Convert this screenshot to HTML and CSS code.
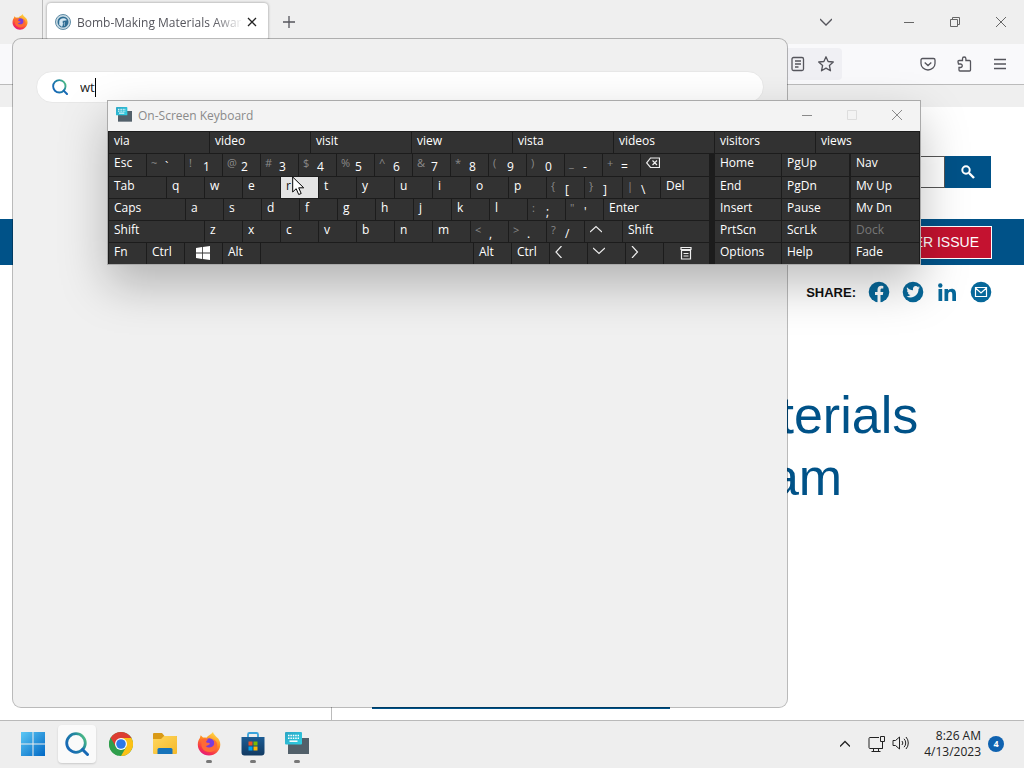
FILE: index.html
```
<!DOCTYPE html>
<html lang="en">
<head>
    <meta charset="UTF-8">
    <meta name="viewport" content="width=device-width, initial-scale=1.0">
    <title>Desktop</title>
    <link rel="stylesheet" href="styles.css">
</head>
<body>
    <!-- Shared icons -->
    <svg class="sprite" aria-hidden="true">
        <defs>
            <linearGradient id="g-search" x1="0" y1="0.6" x2="1" y2="0">
                <stop offset="0" stop-color="#1769b5"/>
                <stop offset="0.6" stop-color="#23899e"/>
                <stop offset="1" stop-color="#5fd07a"/>
            </linearGradient>
            <linearGradient id="g-fox" x1="0.8" y1="0" x2="0.3" y2="1">
                <stop offset="0" stop-color="#ffe24a"/>
                <stop offset="0.45" stop-color="#ff8a20"/>
                <stop offset="0.8" stop-color="#f7354b"/>
                <stop offset="1" stop-color="#e3177f"/>
            </linearGradient>
            <linearGradient id="g-win" x1="0" y1="0" x2="1" y2="1">
                <stop offset="0" stop-color="#5cc8f5"/>
                <stop offset="1" stop-color="#0067c4"/>
            </linearGradient>
            <linearGradient id="g-kb" x1="0" y1="0" x2="1" y2="1">
                <stop offset="0" stop-color="#2ca5c4"/>
                <stop offset="1" stop-color="#2fd0e4"/>
            </linearGradient>
            <linearGradient id="g-folder" x1="0" y1="0" x2="1" y2="1">
                <stop offset="0" stop-color="#ffd75e"/>
                <stop offset="1" stop-color="#f5b92a"/>
            </linearGradient>
            <linearGradient id="g-store" x1="0" y1="0" x2="0" y2="1">
                <stop offset="0" stop-color="#1b5c94"/>
                <stop offset="1" stop-color="#123a62"/>
            </linearGradient>
        </defs>
        <symbol id="i-search" viewBox="0 0 24 24">
            <circle cx="11" cy="11" r="9.3" fill="none" stroke="url(#g-search)" stroke-width="2.8"/>
            <path d="M17.5 17.5l5 5" stroke="#1769b5" stroke-width="3" stroke-linecap="round"/>
        </symbol>
        <symbol id="i-firefox" viewBox="0 0 24 24">
            <path d="M16 0c.4 2 2 3.300 3.500 5 2.600 1.800 3.900 4.800 3.800 7.700C23.100 18.700 18 23.500 12 23.500S.8 18.800.8 12.700c0-3 .9-5.200 2.100-6.700l.8-2.700 2.300 2.300c1.300-.3 2.400-.2 3.400.2C11 3.300 14 3 16 0z" fill="url(#g-fox)"/>
            <circle cx="12.300" cy="11.500" r="5.300" fill="#7a3ddb"/>
            <path d="M4.500 7.500c2.500-1.500 5-1 6.700.4-1.700.3-2.200 1.300-2 2.300 1 .8 2.900.3 3.800 1.500-1 1.700-3 1.500-4.200 2.500 2.500 2.500 7 1.300 8.300-1.600.6-2.300 0-4.400-1.300-5.700 3.500 1.600 5 4.500 4.200 8-1 3-4 5.200-7.600 5.200-5.400 0-8.400-4-7.900-8z" fill="#ff6a35"/>
        </symbol>
        <symbol id="i-keyboard" viewBox="0 0 24 24">
            <path d="M3 6h21v16H3z" fill="#52606a"/>
            <rect x="0" y="0" width="17" height="12.500" rx="1" fill="url(#g-kb)"/>
            <path d="M3 3.500h11M3 6.200h11" stroke="#fff" stroke-width="1.500" stroke-dasharray="1.500 .9"/>
            <path d="M4.500 9.200h8" stroke="#fff" stroke-width="1.500"/>
        </symbol>
    </svg>

    <div class="desktop">
        <main class="browser">
            <!-- Tab strip -->
            <div class="tabs">
                <a class="pinned" href="#" aria-label="Firefox View"><svg width="16" height="16"><use href="#i-firefox"/></svg></a>
                <div class="tab">
                    <svg width="16" height="16" viewBox="0 0 16 16">
                        <circle cx="8" cy="8" r="7.500" fill="#c9dbe4" stroke="#5f8ca6"/>
                        <circle cx="8" cy="8" r="5.500" fill="#2f6d93"/>
                        <path d="M4.500 11V7.500c0-3 5-4 7-1.500L9 6.500c-2 0-2 2-1 3l-1 3zM9.500 8v4" fill="#d6e8f2" stroke="#d6e8f2" stroke-width=".5"/>
                    </svg>
                    <span class="tab-title">Bomb-Making Materials Awareness</span>
                    <button class="plain tab-close" aria-label="Close tab"><svg width="10" height="10" viewBox="0 0 10 10"><path d="M1 1l8 8M9 1L1 9" class="line dark"/></svg></button>
                </div>
                <button class="plain new-tab" aria-label="New tab"><svg width="12" height="12" viewBox="0 0 12 12"><path d="M6 0v12M0 6h12" class="line"/></svg></button>
                <button class="plain list-tabs" aria-label="List all tabs"><svg width="12" height="12" viewBox="0 0 12 12"><path d="M0 3l6 6 6-6" class="line"/></svg></button>
                <div class="window-buttons">
                    <button class="plain" aria-label="Minimize"><svg width="10" height="10" viewBox="0 0 10 10"><path d="M0 5.500h10" class="line thin"/></svg></button>
                    <button class="plain" aria-label="Restore"><svg width="10" height="10" viewBox="0 0 10 10"><path d="M.5 2.500h7v7h-7zM2.500 2.500v-2h7v7h-2" class="line thin"/></svg></button>
                    <button class="plain" aria-label="Close"><svg width="10" height="10" viewBox="0 0 10 10"><path d="M0 0l10 10M10 0L0 10" class="line thin"/></svg></button>
                </div>
            </div>

            <!-- Toolbar -->
            <div class="toolbar">
                <div class="urlbar">
                    <button class="plain" aria-label="Reader view"><svg width="16" height="16" viewBox="0 0 16 16"><rect x="2" y="1.500" width="11.500" height="13" rx="1.500" class="line"/><path d="M5 5h6M5 8h6M5 11h3.500" class="line"/></svg></button>
                    <button class="plain" aria-label="Bookmark"><svg width="16" height="16" viewBox="0 0 16 16"><path d="M8 .8l2.100 4.700 5.200.5-3.900 3.500 1.100 5.300L8 12.100l-4.500 2.700 1.100-5.300L.7 6l5.200-.5z" class="line" stroke-linejoin="round"/></svg></button>
                </div>
                <button class="plain" aria-label="Save to Pocket"><svg width="16" height="16" viewBox="0 0 16 16"><path d="M2.500 2.500h11a1.500 1.500 0 0 1 1.500 1.500v3.500a7 6.500 0 0 1-14 0V4a1.500 1.500 0 0 1 1.500-1.500zM4.700 6.500L8 9.500l3.300-3" class="line"/></svg></button>
                <button class="plain" aria-label="Extensions"><svg width="16" height="16" viewBox="0 0 16 16"><path d="M2 6V5.500a1 1 0 0 1 1-1h3.500V2.700a1.700 1.700 0 0 1 3.400 0v1.800H13.500a1 1 0 0 1 1 1V14a1 1 0 0 1-1 1H4a1 1 0 0 1-1-1v-2.500h1.500a1.700 1.700 0 0 0 0-3.500H2.500z" class="line"/></svg></button>
                <button class="plain" aria-label="Menu"><svg width="16" height="16" viewBox="0 0 16 16"><path d="M2 3.500h12M2 8h12M2 12.500h12" class="line"/></svg></button>
            </div>
            <div class="bookmarks"></div>

            <!-- Web page -->
            <div class="page">
                <form class="site-search">
                    <input type="text" aria-label="Search site">
                    <button type="button" aria-label="Search">
                        <svg width="16" height="16" viewBox="0 0 16 16"><circle cx="6" cy="6" r="3.700" fill="none" stroke="#fff" stroke-width="2"/><path d="M9 9l5 5" stroke="#fff" stroke-width="2.400"/></svg>
                    </button>
                </form>
                <div class="site-nav">
                    <button class="report">REPORT A CYBER ISSUE</button>
                </div>
                <div class="share">
                    <span>SHARE:</span>
                    <a href="#" aria-label="Facebook"><svg width="22" height="22" viewBox="0 0 22 22"><circle cx="11" cy="11" r="10.300" fill="#07689a"/><path d="M9.500 22v-8H7v-3h2.500V8.800c0-2.700 1.500-4 3.800-4l2 .2v2.600H14c-1.200 0-1.500.7-1.500 1.500V11h2.800l-.5 3h-2.300v8z" fill="#fff"/></svg></a>
                    <a href="#" aria-label="Twitter"><svg width="22" height="22" viewBox="0 0 22 22"><circle cx="11" cy="11" r="10.300" fill="#07689a"/><path d="M5 6.200c1.600 1.900 3.700 2.900 6 3-.5-2.600 1-4.200 2.800-4.200.8 0 1.500.3 2 .9l1.800-.7-1.200 1.600 1.600-.4-1.500 1.600c.2 5-3.600 8.400-7.900 8.400-1.600 0-3-.4-4.100-1.200 1.500.1 2.900-.3 4-1.200-1.200 0-2.200-.8-2.600-2h1.200C5.800 11.600 5 10.600 5 9.200l1.200.3C5 8.600 4.500 7.300 5 6.200z" fill="#fff"/></svg></a>
                    <a href="#" aria-label="LinkedIn"><svg width="22" height="22" viewBox="0 0 22 22"><g fill="#07689a"><circle cx="4.300" cy="4.500" r="2.200"/><path d="M2.500 8h3.700v12H2.500zM8.500 8H12v1.600c.7-1.200 2-1.900 3.600-1.900 3.400 0 4.400 2.100 4.400 5.300v7h-3.700v-6.300c0-1.700-.4-2.900-1.900-2.900s-2.200 1.100-2.200 2.900V20H8.500z"/></g></svg></a>
                    <a href="#" aria-label="Email"><svg width="22" height="22" viewBox="0 0 22 22"><circle cx="11" cy="11" r="10.300" fill="#07689a"/><path d="M5.500 6.500h11v9h-11zM5.500 7l5.500 5 5.500-5" fill="none" stroke="#fff" stroke-width="1.200"/></svg></a>
                </div>
                <div class="content">
                    <div class="side-menu"></div>
                    <article>
                        <h1>Bomb-Making Materials<br>Awareness Program</h1>
                        <div class="card-edge"></div>
                    </article>
                </div>
            </div>
        </main>

        <!-- Search flyout -->
        <section class="search-panel">
            <label class="search-box">
                <svg width="16" height="16"><use href="#i-search"/></svg>
                <input type="text" value="wt" aria-label="Type here to search">
            </label>
        </section>

        <!-- On-Screen Keyboard -->
        <section class="osk">
            <header class="osk-title">
                <svg width="16" height="16"><use href="#i-keyboard"/></svg>
                <span>On-Screen Keyboard</span>
                <button class="plain" aria-label="Minimize"><svg width="12" height="12" viewBox="0 0 12 12"><path d="M1 6.500h10" class="line faded"/></svg></button>
                <button class="plain" aria-label="Maximize" disabled><svg width="12" height="12" viewBox="0 0 12 12"><path d="M1.500 1.500h9v9h-9z" class="line disabled"/></svg></button>
                <button class="plain" aria-label="Close"><svg width="12" height="12" viewBox="0 0 12 12"><path d="M1 1l10 10M11 1L1 11" class="line faded"/></svg></button>
            </header>
            <div class="suggestions">
                <button>via</button><button>video</button><button>visit</button><button>view</button><button>vista</button><button>videos</button><button>visitors</button><button>views</button>
            </div>
            <div class="osk-body">
                <div class="keys">
                    <div class="row">
                        <button class="key named">Esc</button>
                        <button class="key dual"><i>~</i><b>`</b></button>
                        <button class="key dual"><i>!</i><b>1</b></button>
                        <button class="key dual"><i>@</i><b>2</b></button>
                        <button class="key dual"><i>#</i><b>3</b></button>
                        <button class="key dual"><i>$</i><b>4</b></button>
                        <button class="key dual"><i>%</i><b>5</b></button>
                        <button class="key dual"><i>^</i><b>6</b></button>
                        <button class="key dual"><i>&amp;</i><b>7</b></button>
                        <button class="key dual"><i>*</i><b>8</b></button>
                        <button class="key dual"><i>(</i><b>9</b></button>
                        <button class="key dual"><i>)</i><b>0</b></button>
                        <button class="key dual"><i>_</i><b>-</b></button>
                        <button class="key dual"><i>+</i><b>=</b></button>
                        <button class="key grow" aria-label="Backspace"><svg width="14" height="12" viewBox="0 0 14 12"><path d="M4.500 1h9v9.500h-9L.7 5.800zM6.500 3.500l4.500 4.500M11 3.500L6.500 8" class="line white"/></svg></button>
                    </div>
                    <div class="row">
                        <button class="key named tab-key">Tab</button>
                        <button class="key">q</button><button class="key">w</button><button class="key">e</button><button class="key pressed">r</button><button class="key">t</button><button class="key">y</button><button class="key">u</button><button class="key">i</button><button class="key">o</button><button class="key">p</button>
                        <button class="key dual"><i>{</i><b>[</b></button>
                        <button class="key dual"><i>}</i><b>]</b></button>
                        <button class="key dual"><i>|</i><b>\</b></button>
                        <button class="key named grow">Del</button>
                    </div>
                    <div class="row">
                        <button class="key named caps-key">Caps</button>
                        <button class="key">a</button><button class="key">s</button><button class="key">d</button><button class="key">f</button><button class="key">g</button><button class="key">h</button><button class="key">j</button><button class="key">k</button><button class="key">l</button>
                        <button class="key dual"><i>:</i><b>;</b></button>
                        <button class="key dual"><i>"</i><b>'</b></button>
                        <button class="key named grow">Enter</button>
                    </div>
                    <div class="row">
                        <button class="key named shift-key">Shift</button>
                        <button class="key">z</button><button class="key">x</button><button class="key">c</button><button class="key">v</button><button class="key">b</button><button class="key">n</button><button class="key">m</button>
                        <button class="key dual"><i>&lt;</i><b>,</b></button>
                        <button class="key dual"><i>&gt;</i><b>.</b></button>
                        <button class="key dual"><i>?</i><b>/</b></button>
                        <button class="key" aria-label="Up"><svg width="12" height="12" viewBox="0 0 12 12"><path d="M0 8l6-5.500L12 8" class="line white"/></svg></button>
                        <button class="key named grow">Shift</button>
                    </div>
                    <div class="row">
                        <button class="key named">Fn</button>
                        <button class="key named">Ctrl</button>
                        <button class="key icon" aria-label="Windows"><svg width="14" height="14" viewBox="0 0 14 14"><path d="M0 2l6-.9v5.500H0zM6.800 1L14 0v6.600H6.800zM0 7.400h6v5.500L0 12zM6.800 7.400H14V14l-7.200-1z" fill="#fff"/></svg></button>
                        <button class="key named">Alt</button>
                        <button class="key space-key" aria-label="Space"></button>
                        <button class="key named">Alt</button>
                        <button class="key named">Ctrl</button>
                        <button class="key named" aria-label="Left"><svg width="12" height="12" viewBox="0 0 12 12"><path d="M6.500 0L1 6l5.500 6" class="line white"/></svg></button>
                        <button class="key named" aria-label="Down"><svg width="12" height="12" viewBox="0 0 12 12"><path d="M0 2l6 5.500L12 2" class="line white"/></svg></button>
                        <button class="key named" aria-label="Right"><svg width="12" height="12" viewBox="0 0 12 12"><path d="M1 0l5.500 6L1 12" class="line white"/></svg></button>
                        <button class="key icon grow" aria-label="Menu"><svg width="12" height="14" viewBox="0 0 12 14"><path d="M1.500 4.500h9v8.500h-9zM1 1.500h10v2H1zM3.500 7.500h5M3.500 10h5" class="line white"/></svg></button>
                    </div>
                </div>
                <div class="nav-keys">
                    <button class="key">Home</button><button class="key">PgUp</button>
                    <button class="key">End</button><button class="key">PgDn</button>
                    <button class="key">Insert</button><button class="key">Pause</button>
                    <button class="key">PrtScn</button><button class="key">ScrLk</button>
                    <button class="key">Options</button><button class="key">Help</button>
                </div>
                <div class="view-keys">
                    <button class="key">Nav</button>
                    <button class="key">Mv Up</button>
                    <button class="key">Mv Dn</button>
                    <button class="key dim">Dock</button>
                    <button class="key">Fade</button>
                </div>
            </div>
        </section>

        <svg class="cursor" width="13" height="20" viewBox="0 0 13 20"><path d="M.7 1v15l3.500-3.300 2.500 5.800 2.500-1-2.500-5.700h5z" fill="#fff" stroke="#000"/></svg>

        <!-- Taskbar -->
        <footer class="taskbar">
            <nav class="apps">
                <button class="app" aria-label="Start"><svg width="24" height="24" viewBox="0 0 24 24"><path d="M0 0h11.500v11.500H0zM12.500 0H24v11.500H12.500zM0 12.500h11.500V24H0zM12.500 12.500H24V24H12.500z" fill="url(#g-win)"/></svg></button>
                <button class="app selected" aria-label="Search"><svg width="24" height="24"><use href="#i-search"/></svg></button>
                <button class="app" aria-label="Chrome">
                    <svg width="24" height="24" viewBox="0 0 24 24">
                        <circle cx="12" cy="12" r="12" fill="#2f9e4b"/>
                        <path d="M12 12L1.600 6A12 12 0 0 1 22.400 6z" fill="#dc3c31"/>
                        <path d="M12 6h10.400A12 12 0 0 1 12 24l5.200-9z" fill="#fbc116"/>
                        <path d="M1.600 6L6.800 15 12 12 9 6z" fill="#dc3c31"/>
                        <path d="M1.600 6L6.800 15l5.200 3-3.200 5.500A12 12 0 0 1 1.600 6z" fill="#2f9e4b"/>
                        <circle cx="12" cy="12" r="6" fill="#fff"/>
                        <circle cx="12" cy="12" r="4.800" fill="#2d78e6"/>
                    </svg>
                </button>
                <button class="app" aria-label="File Explorer">
                    <svg width="24" height="24" viewBox="0 0 24 24">
                        <path d="M0 2a1 1 0 0 1 1-1h8l2.500 3H23a1 1 0 0 1 1 1v5H0z" fill="#d99a17"/>
                        <path d="M0 7h8l3-3h12a1 1 0 0 1 1 1v16a1 1 0 0 1-1 1H1a1 1 0 0 1-1-1z" fill="url(#g-folder)"/>
                        <path d="M4.500 22v-4.500a1.500 1.500 0 0 1 1.500-1.500h12a1.500 1.500 0 0 1 1.500 1.500V22z" fill="#1673ba"/>
                    </svg>
                </button>
                <button class="app running" aria-label="Firefox"><svg width="24" height="24"><use href="#i-firefox"/></svg></button>
                <button class="app running" aria-label="Microsoft Store">
                    <svg width="24" height="24" viewBox="0 0 24 24">
                        <path d="M7 5V2.500A1.500 1.500 0 0 1 8.500 1h7A1.500 1.500 0 0 1 17 2.500V5" fill="none" stroke="#39a3dc" stroke-width="1.800"/>
                        <path d="M.5 5h23v15.500a3 3 0 0 1-3 3h-17a3 3 0 0 1-3-3z" fill="url(#g-store)"/>
                        <path d="M7.500 9.500h4v4h-4z" fill="#f25022"/><path d="M12.500 9.500h4v4h-4z" fill="#7fba00"/>
                        <path d="M7.500 14.500h4v4h-4z" fill="#00a4ef"/><path d="M12.500 14.500h4v4h-4z" fill="#ffb900"/>
                    </svg>
                </button>
                <button class="app running" aria-label="On-Screen Keyboard"><svg width="24" height="24"><use href="#i-keyboard"/></svg></button>
            </nav>
            <div class="tray">
                <button class="plain" aria-label="Show hidden icons"><svg width="10" height="10" viewBox="0 0 10 10"><path d="M0 7.500l5-5 5 5" class="line dark"/></svg></button>
                <div class="status">
                    <svg width="18" height="18" viewBox="0 0 18 18"><path d="M11 2.500H2a1 1 0 0 0-1 1v9a1 1 0 0 0 1 1h12.500V8M5.500 13.500v3M10.500 13.500v3M3.500 16.500h9M12.500 1.500h4v5h-4zM14.500 6.500v7" class="line dark slim"/></svg>
                    <svg width="18" height="16" viewBox="0 0 18 16"><path d="M1 5.500h2.500L7.500 2v12l-4-3.500H1zM10 6a3 3 0 0 1 0 4M12 3.800a6 6 0 0 1 0 8.400M14 2a9 9 0 0 1 0 12" class="line dark slim"/></svg>
                </div>
                <div class="clock">8:26 AM<br>4/13/2023</div>
                <span class="badge">4</span>
            </div>
        </footer>
    </div>
</body>
</html>
```
FILE: styles.css
```
:root {
    --ui-font: "Open Sans", "Noto Sans", sans-serif;
    --page-font: "Liberation Sans", Arial, sans-serif;
    --site-blue: #005288;
    --edge: #b9b9b9;
    --key: #323232;
    --key-gap: #1c1c1c;
}

* {
    margin: 0;
    padding: 0;
    box-sizing: border-box;
}

body {
    font-family: var(--ui-font);
    font-size: 12px;
    color: #222;
    overflow: hidden;
}

button,
input {
    font: inherit;
    color: inherit;
    border: none;
    background: none;
}

svg {
    display: block;
    flex: none;
}

.sprite {
    position: absolute;
    width: 0;
    height: 0;
}

.plain {
    display: flex;
    align-items: center;
    justify-content: center;
}

.desktop {
    position: relative;
    display: flex;
    flex-direction: column;
    height: 100vh;
    background: #fff;
}

/* Icon strokes */
.line {
    fill: none;
    stroke: #55555c;
    stroke-width: 1.3;
}

.line.thin {
    stroke: #666;
    stroke-width: 1;
}

.line.dark {
    stroke: #222;
}

.line.slim {
    stroke-width: 1;
}

.line.white {
    stroke: #eee;
    stroke-width: 1.2;
}

.line.faded {
    stroke: #8a8a8a;
    stroke-width: 1;
}

.line.disabled {
    stroke: #ddd;
    stroke-width: 1;
}

/* Browser */
.browser {
    flex: 1;
    display: flex;
    flex-direction: column;
    min-height: 0;
}

.tabs {
    display: flex;
    height: 44px;
    background: #efefef;
}

.pinned {
    display: flex;
    align-items: center;
    width: 43px;
    padding-left: 12px;
    border-right: 1px solid #bbb;
}

.tab {
    display: flex;
    align-items: center;
    width: 221px;
    height: 38px;
    margin: 3px 0 0 4px;
    padding: 0 11px 0 8px;
    background: #fff;
    border-radius: 4px;
    box-shadow: 0 0 3px rgba(0, 0, 0, 0.4);
}

.tab-title {
    flex: 1;
    margin: 0 4px 0 6px;
    overflow: hidden;
    white-space: nowrap;
    color: #55555c;
    mask-image: linear-gradient(to right, #000 82%, transparent);
}

.new-tab {
    width: 42px;
}

.list-tabs {
    width: 44px;
    margin-left: auto;
}

.window-buttons {
    display: flex;
    margin-left: 38px;
}

.window-buttons button {
    width: 46px;
}

.toolbar {
    display: flex;
    align-items: center;
    justify-content: flex-end;
    gap: 20px;
    height: 41px;
    padding-right: 16px;
    background: #f9f9fb;
    border-bottom: 1px solid #bbb;
}

.urlbar {
    display: flex;
    gap: 12px;
    justify-content: flex-end;
    width: 600px;
    margin-right: auto;
    margin-left: 242px;
    padding: 8px;
    background: #f0f0f4;
    border-radius: 4px;
}

.bookmarks {
    height: 22px;
    background: #efefef;
}

/* Web page */
.page {
    flex: 1;
    display: flex;
    flex-direction: column;
    min-height: 0;
    font-family: var(--page-font);
}

.site-search {
    display: flex;
    justify-content: flex-end;
    height: 32px;
    margin: 49px 33px 31px 0;
}

.site-search input {
    width: 180px;
    border: 1px solid #555;
}

.site-search button {
    display: flex;
    align-items: center;
    justify-content: center;
    width: 46px;
    background: var(--site-blue);
}

.site-nav {
    display: flex;
    align-items: center;
    justify-content: flex-end;
    height: 46px;
    padding-right: 32px;
    background: var(--site-blue);
}

.report {
    height: 33px;
    padding: 0 12px;
    background: #c41230;
    border: 1px solid #fff;
    color: #fff;
    font-size: 14px;
}

.share {
    display: flex;
    align-items: center;
    justify-content: flex-end;
    gap: 12px;
    height: 54px;
    padding-right: 32px;
    color: #111;
    font-size: 13px;
    font-weight: bold;
}

.content {
    flex: 1;
    display: flex;
}

.side-menu {
    width: 332px;
    border-right: 1px solid #bbb;
}

article {
    flex: 1;
    display: flex;
    flex-direction: column;
    padding: 65px 40px 11px;
}

h1 {
    color: var(--site-blue);
    font-size: 52px;
    font-weight: normal;
    line-height: 62px;
}

.card-edge {
    width: 298px;
    height: 3px;
    margin-top: auto;
    background: var(--site-blue);
}

/* Search flyout */
.search-panel {
    position: absolute;
    left: 12px;
    top: 38px;
    bottom: 60px;
    width: 776px;
    padding: 32px 23px;
    background: #f0f0f0;
    background-clip: padding-box;
    border: 1px solid rgba(0, 0, 0, 0.27);
    border-radius: 9px;
}

.search-box {
    display: flex;
    align-items: center;
    gap: 12px;
    height: 32px;
    padding-left: 15px;
    background: #fff;
    border: 1px solid #e8e8e8;
    border-radius: 16px;
}

.search-box input {
    width: 16px;
    height: 19px;
    border-right: 1px solid #000;
    font-size: 13px;
}

/* On-Screen Keyboard */
.osk {
    position: absolute;
    left: 107px;
    top: 100px;
    width: 814px;
    background: var(--key-gap);
    border: 1px solid #aaa;
    box-shadow: 0 20px 44px rgba(0, 0, 0, 0.25);
    color: #fff;
}

.osk-title {
    display: flex;
    align-items: center;
    height: 30px;
    padding: 0 1px 2px 8px;
    background: #f3f3f3;
    color: #8a8a8a;
}

.osk-title span {
    flex: 1;
    margin-left: 6px;
}

.osk-title button {
    width: 45px;
}

.suggestions {
    display: flex;
    gap: 1px;
    height: 22px;
    padding: 1px 1px 0;
}

.suggestions button {
    width: 100px;
    padding: 0 0 3px 5px;
    background: var(--key);
    line-height: 16px;
    text-align: left;
}

.suggestions button:last-child {
    flex: 1;
}

.osk-body {
    display: flex;
    padding: 1px 1px 0;
}

.keys {
    display: grid;
    grid-template-rows: 22px repeat(4, 21px);
    row-gap: 1px;
    width: 600px;
}

.row {
    display: flex;
    gap: 1px;
}

.key {
    display: flex;
    align-items: flex-start;
    flex: none;
    width: 37px;
    padding: 1px 0 0 5px;
    background: var(--key);
    line-height: 16px;
    text-align: left;
}

.key svg {
    margin-top: 2px;
}

.key.icon {
    justify-content: center;
    padding: 1px 2px 0 0;
}

.key.dual {
    gap: 5px;
    padding-left: 4px;
}

.key i {
    width: 9px;
    color: #8a8a8a;
    font-size: 11px;
    font-style: normal;
}

.key b {
    padding-top: 4px;
    font-weight: normal;
}

.tab-key {
    width: 57px;
}

.caps-key {
    width: 76px;
}

.shift-key {
    width: 95px;
}

.space-key {
    width: 212px;
}

.key.grow {
    flex: 1;
}

.key.pressed {
    background: #e4e4e4;
    color: #111;
}

.key.dim {
    color: #777;
}

.nav-keys,
.view-keys {
    display: grid;
    grid-template-rows: 22px repeat(4, 21px);
    gap: 1px;
}

.nav-keys {
    grid-template-columns: 66px 67px;
    margin: 0 2px 0 6px;
}

.view-keys {
    flex: 1;
}

.nav-keys .key,
.view-keys .key {
    width: auto;
}

.cursor {
    position: absolute;
    left: 292px;
    top: 176px;
}

/* Taskbar */
.taskbar {
    display: flex;
    align-items: center;
    justify-content: space-between;
    height: 48px;
    padding: 0 20px 2px 14px;
    background: #eee;
    border-top: 1px solid var(--edge);
}

.apps {
    display: flex;
    gap: 6px;
}

.app {
    position: relative;
    display: flex;
    align-items: center;
    justify-content: center;
    width: 38px;
    height: 38px;
    border-radius: 4px;
}

.app.selected {
    background: #fafafa;
    box-shadow: 0 1px 2px rgba(0, 0, 0, 0.15);
}

.app.running::after {
    content: '';
    position: absolute;
    bottom: 0;
    width: 6px;
    height: 3px;
    border-radius: 2px;
    background: #777;
}

.tray {
    display: flex;
    align-items: center;
}

.status {
    display: flex;
    gap: 6px;
    margin: 0 14px 0 18px;
}

.clock {
    color: #222;
    font-size: 12px;
    line-height: 16px;
    text-align: right;
}

.badge {
    width: 16px;
    height: 16px;
    margin-left: 7px;
    border-radius: 50%;
    background: #0f62b0;
    color: #fff;
    font-size: 9px;
    font-weight: bold;
    line-height: 16px;
    text-align: center;
}
```
